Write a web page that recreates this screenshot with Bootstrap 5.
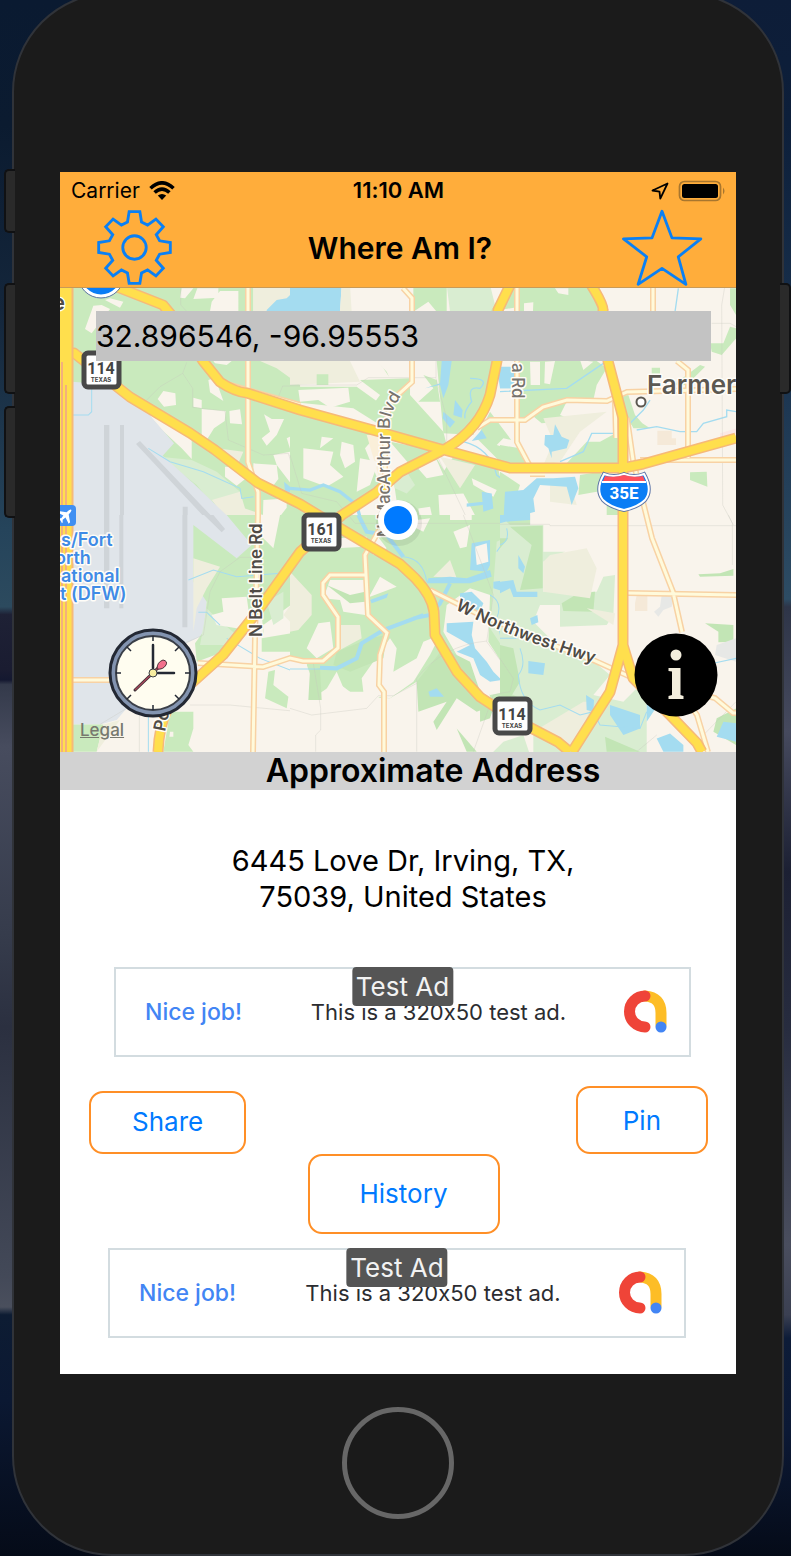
<!DOCTYPE html>
<html lang="en">
<head>
<meta charset="utf-8">
<meta name="viewport" content="width=device-width, initial-scale=1">
<title>Where Am I?</title>
<link href="https://cdn.jsdelivr.net/npm/bootstrap@5.3.0/dist/css/bootstrap.min.css" rel="stylesheet">
<style>
  body {
    font-family: Inter, Roboto, sans-serif;
    font-feature-settings: "calt" 0;
    color: #000;
    background:
      linear-gradient(#0a1a31 0, #0b1b30 8%, #14263b 20%, #25445b 34%, #2c4a5e 39%, #1e2135 39.5%, #1a1c31 43%, #141830 43.7%, #343a4b 44%, #474c5e 48%, #363c4c 60%, #2b3040 66%, #434958 82%, #4a4f5d 84%, #0d1c33 84.5%, #0b1832 90%, #050b18 100%) left / 50% 100% no-repeat,
      linear-gradient(#0d1d38 0, #0d1f3a 8%, #1b3450 24%, #2d4c64 38.5%, #2e3548 39%, #464a5e 47%, #1c2033 56%, #272c3f 66%, #4a4e5e 80%, #3b4052 84.5%, #0d1c38 86%, #0c1935 92%, #050b18 100%) right / 50% 100% no-repeat;
  }
  .phone { margin: -8px 7px 0 12px; padding: 178px 46px 35px; background: #1b1b1b; border: 2px solid #303339; border-radius: 100px; }
  .side-key { position: absolute; left: -10px; width: 11px; background: #2a2a2a; border: 2px solid #101113; border-right: 0; border-radius: 5px 0 0 5px; }
  .key-mute { top: 175px; height: 64px; }
  .key-up { top: 289px; height: 111px; }
  .key-down { top: 412px; height: 112px; }
  .key-power { left: auto; right: -9px; top: 289px; height: 111px; border: 2px solid #101113; border-left: 0; border-radius: 0 5px 5px 0; }
  .amber { background: #ffad3b; }
  .thirds { display: grid; grid-template-columns: 1fr auto 1fr; align-items: center; }
  .status { height: 37px; font-size: 21px; padding: 0 10px 0 11px; }
  .time { font-size: 22px; font-weight: 600; }
  .titlebar { height: 79px; padding: 0 33px 3px 37px; border-bottom: 1px solid #c99a57; }
  .titlebar h1 { font-size: 30px; font-weight: 600; }
  .plain { border: 0; padding: 0; background: none; display: block; line-height: 0; }
  .map-art { display: block; width: 100%; height: auto; }
  .coords { position: absolute; left: 36px; right: 25px; top: 23px; height: 50px; border: 0; padding: 0; background: #c3c3c3; font-size: 30px; color: #000; }
  .clock { position: absolute; left: 48px; bottom: 34px; }
  .info { position: absolute; right: 18px; bottom: 35px; }
  .legal { position: absolute; left: 20px; bottom: 11px; font-size: 17px; line-height: 22px; font-weight: 500; color: #77786f; }
  .heading-bar { background: #d2d2d2; padding-left: 70px; font-size: 32px; line-height: 38px; font-weight: 600; }
  .address { font-size: 29px; line-height: 36px; padding: 53px 0 52px 10px; }
  .ad { height: 90px; border: 2px solid #d3dce0; padding: 0 20px 0 29px; font-size: 22px; color: #2b2c30; }
  .ad-one { margin: 0 45px 29px 54px; }
  .ad-two { margin: 14px 50px 0 48px; }
  .ad-link { color: #4285f4; font-size: 23px; font-weight: 500; text-decoration: none; }
  .ad-copy { padding-left: 12px; }
  .ad-tag { position: absolute; top: -2px; left: 50%; transform: translateX(-50%); background: #555; color: #f2f2f2; border-radius: 4px; padding: 0 4px; font-size: 26px; line-height: 39px; white-space: nowrap; }
  .pill { border: 2px solid #ff8f26; border-radius: 14px; background: #fff; color: #007aff; font-size: 26px; line-height: 36px; }
  .actions { padding: 0 28px 0 29px; }
  .share { padding: 11px 41px 12px; }
  .pin { padding: 15px 45px 13px; }
  .history { padding: 20px 50px; margin-left: 11px; }
  .screen { padding-bottom: 36px; }
  .home { width: 112px; height: 112px; border: 5px solid #676767; border-radius: 50%; background: #1a1a1a; margin-top: 33px; padding: 0; }
  .land { fill: #f9f4ec } .green { fill: #c9eabd } .pale { fill: #d9edd1 } .tan { fill: #efeedd } .water { fill: #a4dcf0 } .deep { fill: #c2e5b5 }
  .minor-edge { fill: none; stroke: #f8d2a4; stroke-width: 6 } .minor-fill { fill: none; stroke: #fffadb; stroke-width: 3 }
  .major-edge { fill: none; stroke: #f6b978; stroke-width: 11; stroke-linejoin: round } .major-fill { fill: none; stroke: #ffdf4d; stroke-width: 8; stroke-linejoin: round }
  .rail { fill: none; stroke: #c5c4bd; stroke-width: 1 } .creek { fill: none; stroke: #a4dcf0 }
  .map-label { font-weight: 600; paint-order: stroke; stroke: #fffdf8; stroke-width: 3; stroke-linejoin: round; }
  .shield-text { font-family: "Liberation Sans Narrow", Roboto, sans-serif; font-weight: 700; text-anchor: middle; fill: #444; }
  .interstate-text { font-family: Roboto, sans-serif; font-weight: 700; text-anchor: middle; fill: #fff; }
</style>
</head>
<body>
<main class="phone position-relative">
  <span class="side-key key-mute"></span>
  <span class="side-key key-up"></span>
  <span class="side-key key-down"></span>
  <span class="side-key key-power"></span>

  <div class="screen bg-white">
    <header class="amber">
      <div class="status thirds">
        <div class="d-flex align-items-center gap-2">Carrier
          <svg width="28" height="20" viewBox="0 0 28 20" fill="none" stroke="#000" stroke-width="3.6"><path d="M2.500 7.200Q14-3.500 25.500 7.200"/><path d="M6.600 11.500Q14 4.600 21.400 11.500"/><path d="M14 19l-4.200-4.500q4.200-3.200 8.400 0z" fill="#000" stroke="none"/></svg>
        </div>
        <div class="time">11:10 AM</div>
        <div class="d-flex align-items-center justify-content-end gap-2">
          <svg width="20" height="20" viewBox="0 0 20 20" fill="none" stroke="#000" stroke-width="1.800" stroke-linejoin="round"><path d="M17.500 2.500L2.500 9.500l7 1.200.8 7z"/></svg>
          <svg width="48" height="22" viewBox="0 0 48 22"><rect x="1.500" y="1.500" width="41" height="19" rx="5" fill="none" stroke="#a8762e" stroke-width="1.700"/><rect x="4" y="4" width="36" height="14" rx="2.500"/><path d="M45 7.500q3 3.500 0 7z" fill="#a8762e"/></svg>
        </div>
      </div>
      <div class="titlebar thirds">
        <button class="plain me-auto" aria-label="Settings">
          <svg width="75" height="75" viewBox="-112 -112 224 224" fill="none" stroke="#0a80f5" stroke-width="8.500"><path d="M-16-107H16L21-76 39-67 64-85 86-62 65-38 75-20 107-15V15L75 20 65 38 86 62 64 85 39 67 21 76 16 107H-16L-21 76-39 67-64 85-86 62-65 38-75 20-107 15V-15L-75-20-65-38-86-62-64-85-39-67-21-76Z"/><circle r="35"/></svg>
        </button>
        <h1 class="m-0">Where Am I?</h1>
        <button class="plain ms-auto" aria-label="Favourites">
          <svg width="82" height="77" viewBox="690 623 246 232" fill="none" stroke="#0a80f5" stroke-width="8.500" stroke-linejoin="round"><path d="M813 630L843 710 930 713 862 767 885 850 813 802 741 850 767 767 697 713 783 710Z"/></svg>
        </button>
      </div>
    </header>

    <section class="position-relative">
      <svg class="map-art" viewBox="60 288 676 464" role="img" aria-label="Map of Irving, Texas">
        <defs>
          <path id="p-mac" d="M390 537V424Q390 412 404 391"/>
          <path id="p-nw" d="M455 609Q500 634 602 666"/>
        </defs>
        <rect x="60" y="288" width="676" height="464" class="land"/>

        <!-- north-west parks and the airport -->
        <g transform="translate(60 285) scale(.3334)">
          <path class="green" d="M35 0H580V80H720V720H35Z"/>
          <path class="tan" d="M580 0H720V80H580ZM600 228H720V300L650 250ZM470 490 550 500 530 545 490 520ZM460 620 540 620 555 670 610 690 530 720 490 690 455 645Z"/>
          <path class="water" d="M620 75L650 45 680 40 700 20 720 30V80H620Z"/>
          <path class="land" d="M365 10H400L375 40 360 38ZM135 45L150 40 190 50 180 68ZM100 62L125 60 150 72 95 145 75 132ZM412 10H475V38L400 42ZM455 50L480 18H535V78H450ZM445 285L465 278 490 348 450 322ZM310 318L346 325 348 360 312 365 293 342ZM400 338L425 345V370L400 365ZM425 372L497 378 494 408 462 430 440 465H425ZM508 378L540 373 546 418 510 415ZM612 388L635 402 672 402 650 450 620 482 605 460 630 440ZM260 380L300 400 395 462V522L365 490 300 430ZM495 545L550 548 560 578 530 602 495 575ZM580 535L650 540 655 582 625 620 580 600ZM640 510L690 500 705 560 700 605 650 540ZM680 460L720 440V505L692 498ZM610 645L680 640V668L640 720H608ZM460 228H515L500 240 465 235Z"/>
          <path class="pale" d="M300 515L395 525 470 560 540 620 455 645 490 700 410 600Z"/>
          <path fill="#e0e5ea" d="M35 290L170 300 260 380 342 475 308 512 400 595 530 720H35Z"/>
          <path fill="#cfd4d8" d="M132 420H148V720H132ZM180 420H192V720H180ZM368 665H383V720H368ZM240 468L480 720H455L228 477Z"/>
          <path class="creek" stroke-width="3" d="M38 390H85L95 380V310M265 490L330 530 430 560 540 610 545 640 580 635"/>
          <path class="water" d="M672 590L690 605 720 595V620L675 620Z"/>
          <path class="rail" stroke-width="3" d="M362 10V60L400 100M260 345L300 305 368 265 380 232M368 265L398 310V367L495 378 505 465 610 510 685 505 715 610M655 335L668 303H720"/>
        </g>
        <g transform="translate(290 285) scale(.3334)">
          <path class="water" d="M0 0H155L150 80H0Z"/>
          <path class="green" d="M370 0H470V80H440L415 50 370 80ZM210 285L360 280V330L460 440 470 480 310 450 230 385 270 330ZM400 270L440 285 450 350 385 350 430 310ZM0 305H200L290 370 270 420 190 370 0 350ZM0 380L260 450 225 490 270 600 150 700 0 720ZM300 470L460 500 440 520 560 720H330L310 580 360 540ZM500 500L620 530 640 620 720 640V720H490L460 560ZM600 380L720 540H640L560 460Z"/>
          <path class="pale" d="M470 0H600L620 80H480ZM520 300L580 260 590 330 550 430 520 440ZM310 580L350 560 375 600 350 625 315 610Z"/>
          <path class="green" d="M600 80L720 60V0H655ZM440 228H610L590 340 550 450 460 445Z"/>
          <path class="tan" d="M0 228H180L210 290 0 300ZM180 0H155L150 80H185ZM450 515L555 540 510 610Z"/>
          <path fill="#faefd9" d="M230 450H270L290 570H265Z"/>
          <path class="green" d="M80 268H115V300H80ZM260 228L290 260 297 275 280 250Z"/>
          <path class="land" d="M25 315L175 308 180 350 120 368 85 345 30 350ZM95 455L130 460 90 490ZM40 490L130 500 120 540 160 575 110 605 40 580ZM155 470L190 480 195 530 165 550 150 510ZM210 520L265 530 240 600 200 620ZM375 540L440 525 460 570 410 580ZM385 670L420 665 430 710H390ZM445 630L520 625 560 700 450 715ZM545 580L620 615 610 635 550 600ZM640 460L690 470 680 500 620 480Z"/>
          <path class="water" d="M455 228H485L475 300 460 340 450 300 405 310 450 295ZM495 345L518 375 515 398 490 390ZM460 380L495 410 480 428 458 400ZM575 435L590 460 545 468ZM620 245H680V310H630ZM575 620L605 625 610 670 580 680ZM655 620L720 650V720H640L650 650ZM530 655L578 650V660L530 665Z"/>
          <path class="creek" stroke-width="10" d="M0 610L60 615 100 600 150 620 200 660 215 715"/>
          <path class="creek" stroke-width="4" d="M540 280Q600 280 570 310 530 300 545 350 520 380 525 400M520 470Q600 490 620 570L660 600"/>
          <path class="rail" stroke-width="3" d="M0 300H200L235 278H438V228M438 280L470 400V470L440 510 540 720M0 510L35 625 140 650 195 715H720"/>
        </g>
        <g transform="translate(500 285) scale(.3334)">
          <path class="green" d="M60 0H290L310 80H60ZM60 228H290L320 250 290 300 280 345 200 350 180 390 220 405 125 415 95 390 60 410ZM355 335L385 330 405 390 440 430 400 430 380 390ZM380 405L420 410 450 430 400 425ZM0 480L60 490 95 540H0ZM300 470L355 440V535H200L260 470ZM240 570L300 560 330 630 290 620 235 630ZM455 248H480V275L455 270ZM520 300L600 240 615 245 560 300ZM570 562L620 560 622 605 570 585ZM320 650H370V690H320ZM690 10H708V90L690 60ZM630 175L670 175 690 125 708 130V160L665 210 635 200ZM0 560L60 600 20 720H0Z"/>
          <path class="land" d="M90 230H120V300H92ZM135 230L165 228 150 298 133 295ZM240 225L280 230 250 255ZM72 55L100 52 98 100 72 90ZM165 10H205V30L175 25Z"/>
          <path class="tan" d="M130 400L320 380 240 440 180 530 130 540 160 470ZM150 600L210 590 230 660 150 650Z"/>
          <path class="water" d="M135 450L160 450 165 418 185 455 208 465 200 490 155 500 155 520 145 490 133 480ZM0 250L30 270 35 310H0ZM160 580L225 575 235 610 215 660 200 605 120 600 100 640 105 680 70 690 10 715 15 620 70 615 110 580Z"/>
          <path class="creek" stroke-width="4" d="M0 320L200 310 310 235M180 530L250 500 275 445H350M385 420L430 375 450 345M410 435L470 425 540 440H590L610 415 680 395V375L708 380M525 80L535 10"/>
          <path fill="#f5e9d8" d="M472 437H515V460H528V480H472Z"/>
          <path fill="#fbe8e5" d="M660 445L708 430V455L660 465Z"/>
          <path class="rail" stroke-width="3" d="M675 0L665 60 668 660 700 720M635 115H690L708 125"/>
        </g>
        <g transform="translate(60 515) scale(.3334)">
          <path fill="#e0e5ea" d="M30 0H530L570 70 575 130 530 130 480 170 440 260 430 360 380 385 350 440 200 580 170 615 120 628H30Z"/>
          <path fill="#cfd4d8" d="M132 0H148V280H132ZM178 0H190V280H178ZM367 0H382V337H367ZM432 0H460L495 42 485 52Z"/>
          <path class="green" d="M500 0H720V100L570 320 520 400 410 440 405 385 430 350 440 260 400 200V30L530 130 575 90ZM615 40H720V250L610 330V370L600 200ZM605 370L720 350V410H605ZM625 470L645 465 640 510 685 545 680 580 615 550ZM330 590H400V640L385 690 400 710H310ZM35 628H130L110 710H35Z"/>
          <path class="pale" d="M440 280L470 310 530 360 510 390 420 390ZM620 260L670 230V310L640 330Z"/>
          <path class="tan" d="M400 130L480 155 440 220 410 280 400 350ZM670 300L720 230V350ZM130 628L180 615 110 710Z"/>
          <path class="land" d="M485 250L560 245 570 320 530 340 470 330 455 300 490 290ZM600 0H660L640 100 600 60ZM330 650H340V665H328Z"/>
          <path class="creek" stroke-width="3" d="M385 195L460 165 530 185 720 170M415 292H440L480 330M500 370L600 430 690 465 720 460M265 600V710"/>
          <path class="rail" stroke-width="3" d="M575 127H540L480 170 450 230 430 360 350 395M390 570H510L720 590M200 580L120 628M238 600V710"/>
        </g>
        <g transform="translate(290 515) scale(.3334)">
          <path class="green" d="M0 0H720V440L680 480 690 560 610 580 560 400 470 430 380 500 300 550 200 545 140 500 60 555 50 440 0 430Z"/>
          <path class="tan" d="M0 170L65 240V300L25 345 0 350ZM430 185L480 135 500 190ZM140 330H210L215 370 140 410Z"/>
          <path class="land" d="M140 70L230 65 225 95 135 100ZM245 90L260 60 290 100 250 120ZM120 195H225V300L160 290 150 255 100 250ZM235 250L270 185 320 215 240 245ZM0 450H50L90 555 140 470 165 530 220 530 215 490 300 370 320 400 310 470 380 430 400 380 450 360 420 420 370 500 300 550 270 545 220 580H0ZM470 270L540 220 600 240 595 380 660 480 650 530 600 540 540 490 460 350ZM490 50L540 30 530 95 510 100ZM480 0H545V15H480ZM0 580H720V720H0ZM85 325L120 320 130 400 80 430 50 400ZM340 20L420 10 400 50Z"/>
          <path class="deep" d="M110 210L180 240 225 230V260L180 265ZM140 410L240 370 290 360 280 430 180 470 130 450ZM60 465L90 460 95 555H55ZM380 500L460 400 540 440 570 530 600 575 560 590 500 550 440 645 430 620 470 560 385 590ZM500 640L560 710H530ZM570 560L620 550 600 610 570 620Z"/>
          <path class="pale" d="M620 80L720 30V380L640 400 600 340ZM640 680L700 660 720 720H600Z"/>
          <path class="water" d="M545 85L600 75V150L590 170 540 165ZM415 190L480 185 530 190 600 165 605 185 540 205 410 205ZM510 235L545 230 580 265 565 300 510 260ZM470 325L550 320 545 360 555 400 590 440 610 470 635 495 600 500 570 480 550 430 500 410 540 390 470 350ZM610 200L650 195 675 240 610 220ZM240 255L295 235 290 248 245 265ZM415 530L440 520 462 545 420 545ZM685 130L700 150V175L685 170ZM640 0H720V15L650 20Z"/>
          <path class="land" d="M555 95L590 85 595 140 560 150Z"/>
          <path class="creek" stroke-width="12" d="M205 0L230 50 290 60 340 125M400 300L280 345 215 385 200 430 140 460 90 458M480 205L450 265 420 300 370 310"/>
          <path class="creek" stroke-width="3" d="M340 125Q400 130 410 200M620 110Q660 60 640 20M600 240Q640 260 620 310L640 400M0 462H90"/>
          <path class="rail" stroke-width="3" d="M175 0L195 25H720M520 0L610 240 590 380 670 490 660 530 610 540 550 710M590 378Q460 390 380 490V710M0 580L65 600 230 580 265 542H310L380 505M70 445L92 580V645L77 660V710"/>
        </g>
        <g transform="translate(500 515) scale(.3334)">
          <path class="pale" d="M0 0L30 30H130V110H195L130 140V230H290L310 185 345 180 340 300 320 330 180 335V270H120L100 320 170 390 270 430 330 480 280 540 370 560 440 490V720H100V640H60V550L0 520Z"/>
          <path class="deep" d="M30 35L128 32V220L60 225 95 90ZM0 70H25L0 100ZM0 390L40 400 60 500 30 550 0 540ZM185 265L235 235 285 230 280 290 190 288ZM315 665L420 710H320ZM615 325L700 330V380L655 382V350ZM595 178L660 175 700 162V182L600 185ZM650 610L708 580V690L640 650Z"/>
          <path class="tan" d="M150 120L260 100 290 160 270 250 130 230V140ZM260 280L345 295 340 330ZM100 650L250 560 280 560 220 710Z"/>
          <path fill="#e7e8e6" d="M485 240L520 245 515 275 490 285 475 305 462 290 480 275ZM650 390L708 370V440L645 420Z"/>
          <path fill="#f5e9d8" d="M410 240H442V288H405V265Z"/>
          <path class="water" d="M0 200L40 195 50 230H112V246H40L30 220 0 235ZM55 120L75 155 70 175 55 160ZM90 310L112 300 115 322 95 330ZM85 438L135 445 130 480 85 475ZM258 540L282 555 280 590 260 585ZM330 570L420 600V640L370 660 330 600ZM440 565L480 560 440 620ZM470 670L510 655 550 690V710H490ZM670 620L708 625V680L650 665ZM0 0H90L0 25Z"/>
          <path class="creek" stroke-width="3" d="M20 40Q30 80 0 90M0 370H50M60 400Q80 450 55 480 60 560 120 585L180 570 240 600 280 590 300 630 420 640 440 590M640 445 708 430"/>
          <path class="rail" stroke-width="3" d="M0 28H148L150 32H708M685 0L697 25V150M410 710L470 660M615 655L708 560M0 430L40 490 30 530 0 535"/>
        </g>

        <!-- roads: edges first, then fills -->
        <defs>
          <path id="minor" d="M248 288V462L258 492V515L255 638 253 752M517 288V442L533 472M477 428L490 420H525L543 407 567 400 607 401 627 392 736 389M403 288L412 298V382L390 402 385 430V520L365 555 368 615 387 633 380 655 379 685 384 692V752M365 575H330L323 583V595L338 617V648L323 661H303L290 658 263 667 198 663M70 680H120M653 288V361M677 361L688 370V458M640 460H736M615 400L616 438M627 418L633 460 643 502 652 538 673 592 682 632M628 593 736 595M430 590L480 615 553 645 593 660 633 678 715 698 733 713H740M690 705L697 715 708 752M220 382 300 405M530 474H545"/>
          <path id="major" d="M60 353H74L130 397 190 433 215 450 258 483 300 504 343 530 400 564 415 578Q432 596 434 612L435 635 457 672 480 697 512 718 558 742 570 752M100 283L117 287 163 305Q185 330 203 361L220 382Q235 392 247 393L300 410 380 432 437 448 510 468H623L643 464 736 438M511 283L498 310 497 361 490 395Q480 428 447 448L400 472 377 492 342 515 300 552 257 612 223 655 193 682Q160 700 158 752M590 283Q604 305 603 310L608 361 623 418V645L610 692 572 752M623 645L633 678 670 715 697 743 702 752"/>
        </defs>
        <use href="#minor" class="minor-edge"/><use href="#minor" class="minor-fill"/>
        <use href="#major" class="major-edge"/><use href="#major" class="major-fill"/>
        <path d="M66 288V752" stroke="#f6b978" stroke-width="15"/><path d="M65 288V752" stroke="#ffdf4d" stroke-width="13"/>
        <path d="M62 362V752M66 385V752" stroke="#f3b07c" stroke-width="2"/>

        <!-- shields and symbols -->
        <circle cx="101" cy="275" r="21" fill="#0a7df5" stroke="#fff" stroke-width="3"/><circle cx="101" cy="275" r="23" fill="none" stroke="#6077a8"/>
        <g id="tx"><rect x="84" y="353" width="35" height="34" rx="4" fill="#fff" stroke="#484848" stroke-width="5"/><text class="shield-text" x="101" y="374" font-size="16">114</text><text x="101" y="382" font-size="6" font-weight="700" text-anchor="middle" fill="#444">TEXAS</text></g>
        <use href="#tx" x="411" y="346"/>
        <g><rect x="304" y="515" width="35" height="34" rx="4" fill="#fff" stroke="#484848" stroke-width="5"/><text class="shield-text" x="321" y="535" font-size="16">161</text><text x="321" y="543" font-size="6" font-weight="700" text-anchor="middle" fill="#444">TEXAS</text></g>
        <g id="interstate">
          <path d="M604 474Q614 478 624 474 634 478 644 474 653 490 645 500 638 507 624 510 610 507 603 500 595 490 604 474Z" fill="#0a7df5" stroke="#6077a8" stroke-width="4"/>
          <path d="M604 474Q614 478 624 474 634 478 644 474 653 490 645 500 638 507 624 510 610 507 603 500 595 490 604 474Z" fill="#0a7df5" stroke="#fff" stroke-width="2"/>
          <path d="M605 476Q615 478 624 475 633 478 643 476L645 481H603Z" fill="#ff4f5c"/><path d="M602 482H646" stroke="#fff" stroke-width="2"/>
          <text x="624" y="499" font-size="17" class="interstate-text">35E</text>
        </g>
        <rect x="55" y="505" width="21" height="21" rx="4" fill="#3f8ff2"/>
        <path transform="translate(65.500 515.500) rotate(45)" fill="#fff" d="M0-8Q1.500-8 1.500-3L8 1.500V3.500L1.500 1.500 1 5 3 7V8L0 7-3 8V7L-1 5-1.500 1.500-8 3.500V1.500L-1.500-3Q-1.500-8 0-8Z"/>

        <!-- place and street names -->
        <g class="map-label" font-size="17" fill="#4f4b46">
          <text x="52" y="310" font-size="22">e</text>
          <text x="647" y="394" font-size="26" fill="#5c5851">Farmers</text>
          <text transform="translate(262 637) rotate(-90)">N Belt Line Rd</text>
          <text transform="translate(512 363) rotate(90)" font-weight="500" fill="#77736d">a Rd</text>
          <text transform="translate(165 732) rotate(-78)">Po</text>
          <text font-weight="500" fill="#77736d"><textPath href="#p-mac">N MacArthur Blvd</textPath></text>
          <text><textPath href="#p-nw">W Northwest Hwy</textPath></text>
        </g>
        <g class="map-label" font-size="18" fill="#408be6">
          <text x="61" y="546">s/Fort</text><text x="55" y="564">orth</text><text x="61" y="582">ational</text><text x="60" y="600">t (DFW)</text>
        </g>
        <circle cx="641" cy="402" r="4.500" fill="#fff" stroke="#5c5851" stroke-width="2"/>
        <circle cx="399" cy="523" r="23" fill="#000" opacity=".07"/>
        <circle cx="398" cy="520" r="20" fill="#fff"/><circle cx="398" cy="520" r="14" fill="#007aff"/>
      </svg>

      <input class="coords" type="text" value="32.896546, -96.95553" aria-label="Coordinates" readonly>
      <button class="plain clock" aria-label="Recent locations">
        <svg width="90" height="90" viewBox="0 0 90 90">
          <circle cx="45" cy="45" r="43" fill="#8394b0" stroke="#232833" stroke-width="3"/>
          <circle cx="45" cy="45" r="37" fill="#fffdf0" stroke="#3a3f48" stroke-width="2"/>
          <path d="M45 8V13M45 77V82M8 45H13M77 45H82M19 19L23 23M67 67L71 71M19 71L23 67M67 23L71 19" stroke="#232833" stroke-width="1.500"/>
          <path d="M45 45V17M45 45H66" stroke="#232833" stroke-width="2.500" stroke-linecap="round"/>
          <path d="M27 62L50 40" stroke="#3a3035" stroke-width="3" stroke-linecap="round"/><path d="M27 62L50 40" stroke="#a5465a" stroke-width="1.500"/>
          <path d="M49 41Q49 34 55 32 60 33 58 37 55 42 49 41Z" fill="#f2708c" stroke="#4a3038" stroke-width="1"/>
          <circle cx="45" cy="45" r="4" fill="#f7eda0" stroke="#3a3f48"/>
        </svg>
      </button>
      <button class="plain info" aria-label="Information">
        <svg width="84" height="84" viewBox="0 0 84 84"><circle cx="42" cy="42" r="41.500"/><circle cx="42" cy="22" r="5.500" fill="#f3eedd"/><path d="M34.500 35H46.500V62L49.500 63V66H34.500V63L38 62V38.500L34.500 38Z" fill="#f3eedd"/></svg>
      </button>
      <a class="legal" href="#">Legal</a>
    </section>

    <h2 class="heading-bar text-center m-0">Approximate Address</h2>
    <p class="address text-center m-0">6445 Love Dr, Irving, TX,<br>75039, United States</p>

    <aside class="ad ad-one position-relative d-flex align-items-center justify-content-between">
      <a class="ad-link" href="#">Nice job!</a>
      <span class="ad-copy">This is a 320x50 test ad.</span>
      <svg width="46" height="46" viewBox="0 0 46 46" fill="none" stroke-linecap="round" stroke-width="11"><path d="M22 7Q38 8 38 24V36" stroke="#fdbd26"/><path d="M22 7A15.500 15.500 0 0 0 22 38" stroke="#ef4438"/><circle cx="38" cy="38" r="5.500" fill="#4285f4"/></svg>
      <span class="ad-tag">Test Ad</span>
    </aside>

    <div class="actions d-flex justify-content-between align-items-end">
      <button class="pill share">Share</button>
      <button class="pill pin">Pin</button>
    </div>
    <div class="d-flex justify-content-center">
      <button class="pill history">History</button>
    </div>

    <aside class="ad ad-two position-relative d-flex align-items-center justify-content-between">
      <a class="ad-link" href="#">Nice job!</a>
      <span class="ad-copy">This is a 320x50 test ad.</span>
      <svg width="46" height="46" viewBox="0 0 46 46" fill="none" stroke-linecap="round" stroke-width="11"><path d="M22 7Q38 8 38 24V36" stroke="#fdbd26"/><path d="M22 7A15.500 15.500 0 0 0 22 38" stroke="#ef4438"/><circle cx="38" cy="38" r="5.500" fill="#4285f4"/></svg>
      <span class="ad-tag">Test Ad</span>
    </aside>
  </div>
  <button class="home d-block mx-auto" aria-label="Home"></button>
</main>
<script src="https://cdn.jsdelivr.net/npm/bootstrap@5.3.0/dist/js/bootstrap.bundle.min.js"></script>
</body>
</html>
